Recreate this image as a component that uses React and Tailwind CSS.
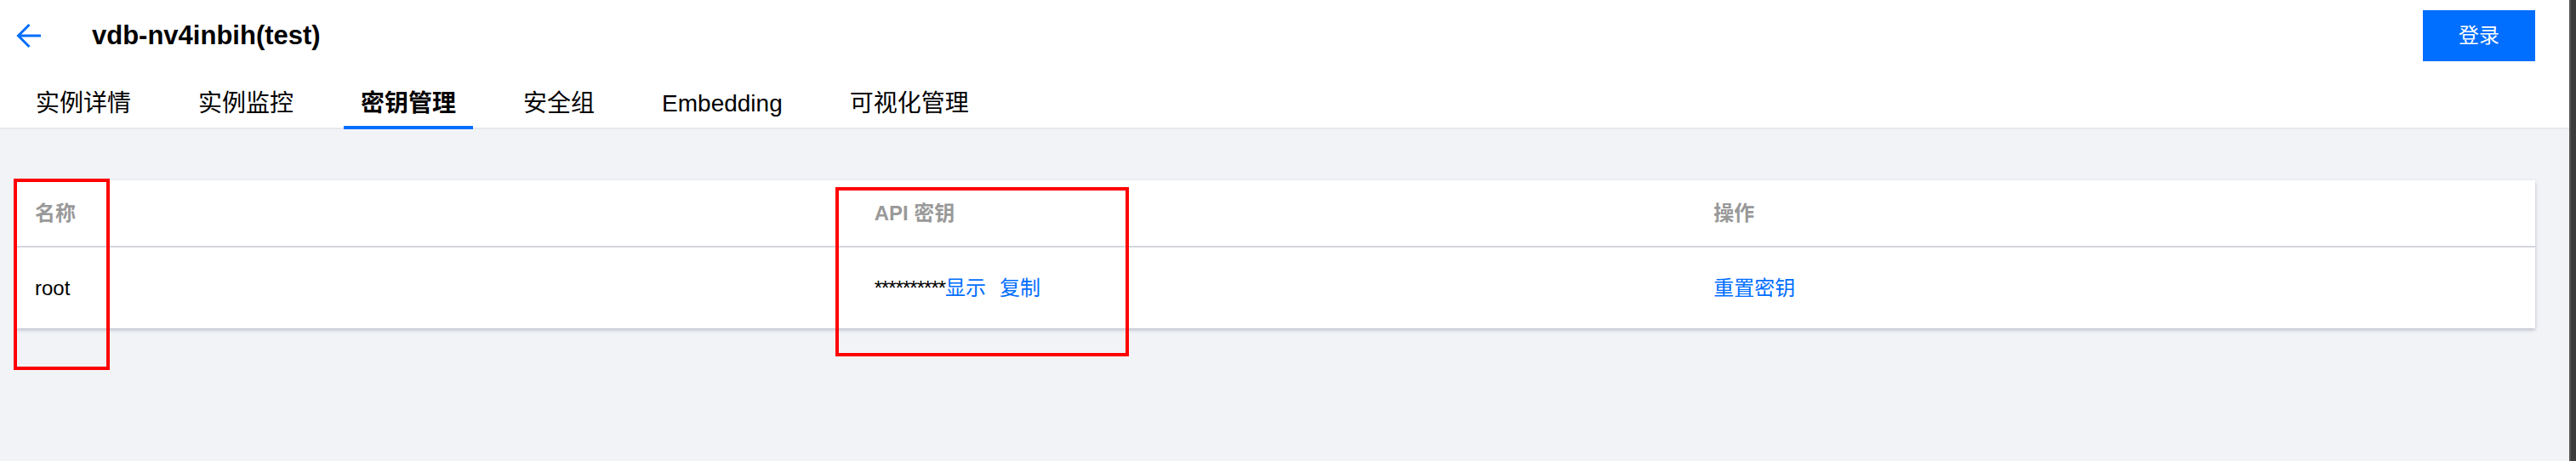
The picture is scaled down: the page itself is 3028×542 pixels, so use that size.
import React from 'react';

// Tabs shown under the instance title
const tabs = ['实例详情', '实例监控', '密钥管理', '安全组', 'Embedding', '可视化管理'];
const activeTab = '密钥管理';

const FONT = { fontFamily: '"Liberation Sans", "Noto Sans CJK SC", sans-serif' };

const BackArrow = () => (
  <svg width="30" height="30" viewBox="0 0 30 30" fill="none" stroke="#006eff" strokeWidth="3" strokeLinecap="butt" strokeLinejoin="miter">
    <path d="M2 15H29" />
    <path d="M15.5 2L2.5 15L15.5 28" />
  </svg>
);

const App = () => {
  return (
    <div className="relative flex h-[542px] w-full overflow-hidden" style={FONT}>
      <div className="flex-1 flex flex-col bg-[#f2f3f7]">
        {/* Header */}
        <div className="bg-white border-b-2 border-[#e7e8ec]">
          <div className="h-[84px] flex items-center pl-[19px] pr-[40px]">
            <BackArrow />
            <h1 className="ml-[59px] text-[31px] leading-[36px] font-bold text-black">vdb-nv4inbih(test)</h1>
            <button className="ml-auto w-[132px] h-[60px] bg-[#006eff] text-white text-[24px] leading-[24px]">
              登录
            </button>
          </div>
          <div className="flex gap-[39px] pl-[22px] -mb-[2px]">
            {tabs.map((tab) => (
              <div
                key={tab}
                className={`px-[20px] pt-[24px] pb-[12px] text-[28px] leading-[28px] border-b-4 ${
                  tab === activeTab ? 'border-[#006eff] font-bold text-black' : 'border-transparent text-black'
                }`}
              >
                {tab}
              </div>
            ))}
          </div>
        </div>

        {/* Key table */}
        <div className="pt-[60px] pl-[20px] pr-[40px]">
          <div className="bg-white shadow-[0_2px_4px_0_rgba(40,50,80,0.28)]">
            <div className="grid grid-cols-3 h-[79px] items-center border-b-2 border-[#d3d6de] text-[24px] leading-[24px] font-semibold text-[#999999]">
              <div className="px-[21px]">名称</div>
              <div className="px-[21px]">API 密钥</div>
              <div className="px-[21px]">操作</div>
            </div>
            <div className="grid grid-cols-3 h-[95px] items-center text-[24px] leading-[24px]">
              <div className="px-[21px] text-black">root</div>
              <div className="px-[21px] flex items-center">
                <span className="text-black tracking-[-1px]">**********</span>
                <span className="text-[#006eff]">显示</span>
                <span className="ml-[16px] text-[#006eff]">复制</span>
              </div>
              <div className="px-[21px] text-[#006eff]">重置密钥</div>
            </div>
          </div>
        </div>
      </div>
      <div className="w-[8px] bg-[#3c3c3c] border-l-2 border-[#555555]" />

      {/* Red annotation boxes */}
      <div className="absolute left-[16px] top-[210px] w-[113px] h-[225px] border-4 border-[#ff0000] pointer-events-none" />
      <div className="absolute left-[982px] top-[220px] w-[345px] h-[199px] border-4 border-[#ff0000] pointer-events-none" />
    </div>
  );
};

export default App;
